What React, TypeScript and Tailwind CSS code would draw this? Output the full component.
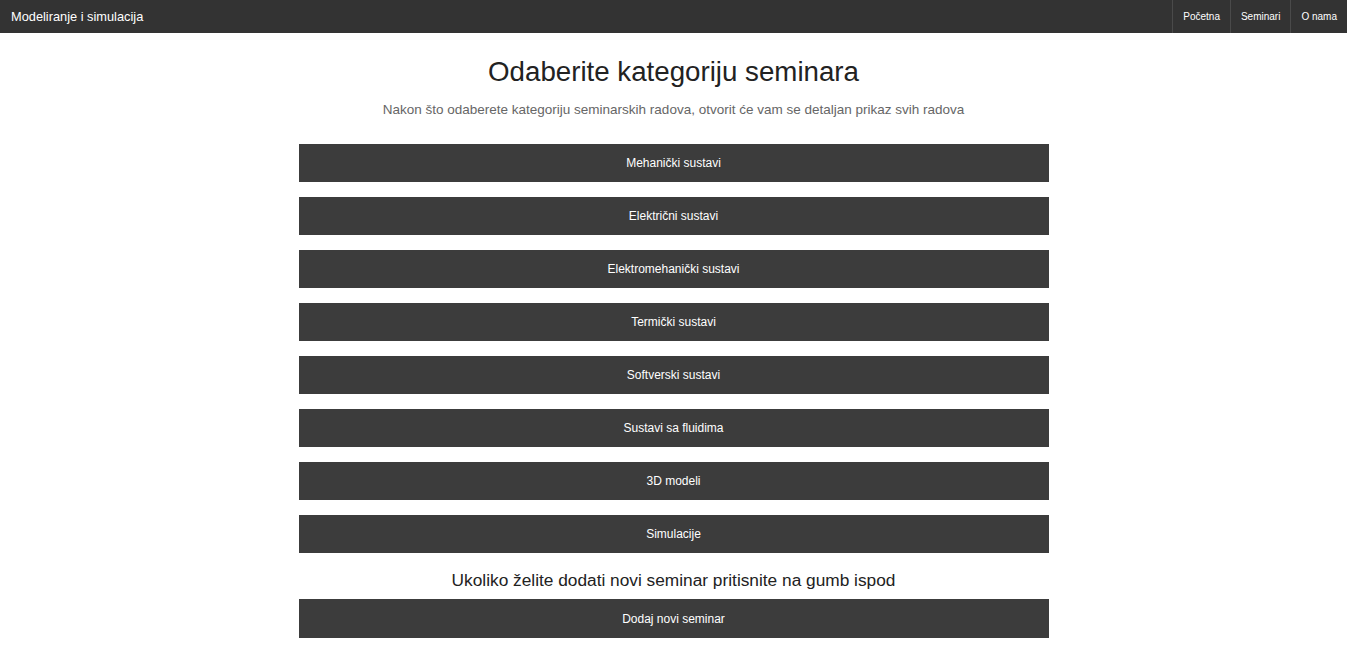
import React from "react";

const cats = [
  "Mehanički sustavi",
  "Električni sustavi",
  "Elektromehanički sustavi",
  "Termički sustavi",
  "Softverski sustavi",
  "Sustavi sa fluidima",
  "3D modeli",
  "Simulacije",
];

export default function App() {
  return (
    <div className="min-h-screen bg-white" style={{ fontFamily: '"Liberation Sans", Arial, sans-serif' }}>
      <nav className="h-[33px] bg-[#333333] flex items-stretch justify-between">
        <div className="flex items-center pl-[11px] text-[12.8px] text-white">Modeliranje i simulacija</div>
        <div className="flex items-stretch">
          {["Početna", "Seminari", "O nama"].map((t) => (
            <div key={t} className="flex items-center px-[10px] text-[10px] text-white border-l border-[#4a4a4a]">
              {t}
            </div>
          ))}
        </div>
      </nav>
      <div className="flex flex-col items-center">
        <h1 className="mt-[23px] text-[27.7px] leading-[32px] text-[#222]">Odaberite kategoriju seminara</h1>
        <p className="mt-[13px] text-[13.5px] leading-[18px] text-[#666]">
          Nakon što odaberete kategoriju seminarskih radova, otvorit će vam se detaljan prikaz svih radova
        </p>
        <div className="mt-[25px] w-[750px] flex flex-col gap-[15px]">
          {cats.map((c) => (
            <div key={c} className="h-[38px] bg-[#3c3c3c] text-white text-[12px] flex items-center justify-center">
              {c}
            </div>
          ))}
        </div>
        <p className="mt-[17px] text-[17.3px] leading-[20px] text-[#222]">
          Ukoliko želite dodati novi seminar pritisnite na gumb ispod
        </p>
        <div className="mt-[9px] w-[750px] h-[39px] bg-[#3c3c3c] text-white text-[12px] flex items-center justify-center">
          Dodaj novi seminar
        </div>
      </div>
    </div>
  );
}
